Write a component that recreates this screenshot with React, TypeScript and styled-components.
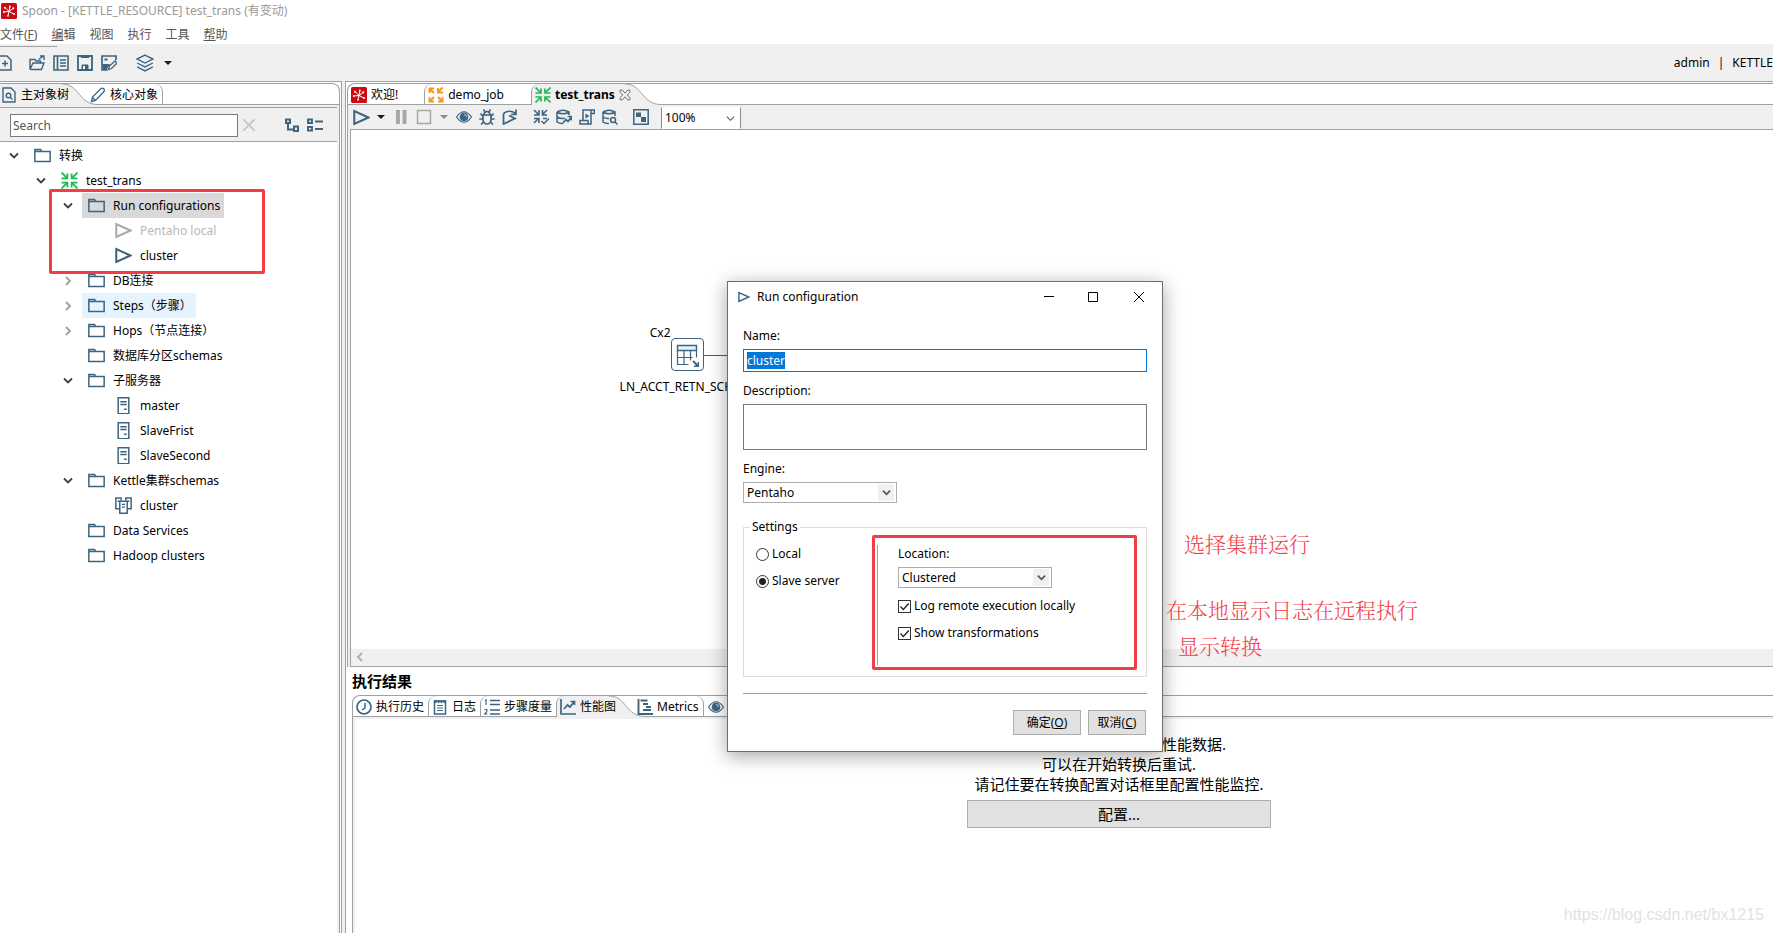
import React, { useEffect, useRef } from "react";
import styled, { createGlobalStyle, css } from "styled-components";

const LINE = "#a0a0a0";
const FACE = "#f0f0f0";
const BLUE = "#3d6480";
const RED = "#f23c46";

const GlobalStyle = createGlobalStyle`
  * { box-sizing: border-box; }
  body {
    margin: 0;
    background: ${FACE};
    color: #000;
    font: 12px/18px "Noto Sans", "Noto Sans CJK SC", sans-serif;
  }
  button, input, textarea, select { font: inherit; color: inherit; }
`;

/* ---------- icons ---------- */

const Svg = styled.svg`
  display: block;
  flex: none;
  fill: none;
`;

type IconName =
  | "spoon" | "newFile" | "open" | "explore" | "save" | "saveAs" | "layers" | "pageSearch" | "pencil"
  | "clear" | "expand" | "collapse" | "folder" | "trans" | "job" | "play" | "server" | "cluster"
  | "pause" | "stop" | "eye" | "bug" | "replay" | "verify" | "impact" | "sql" | "dbSearch" | "results"
  | "history" | "log" | "metrics" | "chart" | "gantt" | "close";

const drawings: Record<IconName, React.ReactNode> = {
  spoon: (
    <>
      <rect width="16" height="16" rx="1.5" fill="#cc0a14" stroke="none" />
      <path d="M8 8.500L4.500 5M8 8.500l.800-4.500M8 8.500l4-3M8 8.500l5 2.500M8 8.500l-1 4M8 8.500l-5 .500" stroke="#fff" strokeWidth="1" />
      <g fill="#fff" stroke="none">
        <circle cx="4" cy="4.800" r="1" /><circle cx="12.300" cy="5.200" r="1" />
        <circle cx="13" cy="11" r="1" /><circle cx="7" cy="12.800" r=".9" />
        <circle cx="2.800" cy="9" r=".9" /><circle cx="8.900" cy="3.500" r=".9" />
      </g>
    </>
  ),
  newFile: <><path d="M2.500 1h8.500l4 4v10H2.500z" strokeWidth="1.500" /><path d="M6 8.500h6M9 5.500v6" strokeWidth="1.500" /></>,
  open: (
    <>
      <path d="M1 14.500V4.500h5l1 1.500h4.500v2M1 14.500h11.500l2.500-6.500H4L1 14.500" strokeWidth="1.400" />
      <path d="M9.500 4.500l5-3.500M11 1h4v4" strokeWidth="1.400" />
    </>
  ),
  explore: <><path d="M1 1h14v14H1zM4.500 1v14" strokeWidth="1.600" /><path d="M7 5h6M7 8h6M7 11h6" strokeWidth="1.500" /></>,
  save: <><path d="M1 1h14v14H1z" strokeWidth="1.800" /><path d="M4 2.500h8M5 10h6v5H5z" fill={BLUE} strokeWidth="1" /><path d="M6 11h2v3H6z" fill="#fff" stroke="none" /></>,
  saveAs: <><path d="M6.500 15H1V1h14v4" strokeWidth="1.700" /><path d="M3.500 3.500h3v2h-3zM2 9h7l-3.500 6H2z" fill={BLUE} stroke="none" /><path d="M7.500 14.500l1-3.500 5.500-5 2 2-5.500 5.500z" strokeWidth="1.300" /></>,
  layers: <path d="M8 1l7 3.500L8 8 1 4.500zM1 8l7 3.500L15 8M1 11.500L8 15l7-3.500" strokeWidth="1.200" />,
  pageSearch: <><path d="M2 1h8l4 4v10H2z" strokeWidth="1.400" /><circle cx="7.500" cy="8.500" r="2.300" strokeWidth="1.400" /><path d="M9.500 10.500l2 2" strokeWidth="1.400" /></>,
  pencil: <path d="M1.500 14.500l1-4.500 8.500-8.500q1.500-1 2.700.3t.3 2.700L5.500 13.500zM2.500 10.500l3 3" strokeWidth="1.300" />,
  clear: <path d="M1.500 1.500l13 13M14.500 1.500l-13 13" stroke="#c4c4c4" strokeWidth="2" />,
  expand: <path d="M2 2.500h4v3.500H2zM4 6v6.500h6M10 9.500h4V14h-4z" strokeWidth="2" />,
  collapse: <path d="M1 2.500h4V6H1zM1 10h4v3.500H1zM8 4.500h8M8 12h8" strokeWidth="1.900" />,
  folder: <path d="M.800 13.700V2.300h5.400l1 2h8v9.400zM.800 4.300h6.400" strokeWidth="1.400" />,
  trans: (
    <g stroke="#1db954" strokeWidth="1.700">
      <path d="M.500.500l5 5M15.500.500l-5 5M.500 15.500l5-5M15.500 15.500l-5-5" />
      <path d="M6 1.500V6H.500M10 1.500V6h5.500M6 14.500V10H.500M10 14.500V10h5.500" />
    </g>
  ),
  job: (
    <g stroke="#f7981d" strokeWidth="2">
      <path d="M1.500 6V1.500H6M2 2l4 4M14.500.500L10 5M10 1v4.500h5M14.500 10v4.500H10M14 14l-4-4M2 14l4-4M1.500 10v4.500H6" />
    </g>
  ),
  play: <path d="M1.200 2v12L14.500 8z" strokeWidth="1.900" />,
  server: <><path d="M3 .700h10v15H3z" strokeWidth="1.400" /><path d="M5 4.500h6M5 7h6M8.500 11.500H11" strokeWidth="1.400" /></>,
  cluster: <><path d="M4 11H.800V1h5v2M12 11h3.200V1h-5v2M4.500 4h7v11.300h-7z" strokeWidth="1.400" /><path d="M2.500 4h2M11.500 4h2M6.500 7h3M6.500 9.500h3" strokeWidth="1.200" /></>,
  pause: <path d="M4.500 0v16M12 0v16" stroke="#a6a6a6" strokeWidth="4.500" />,
  stop: <path d="M1.500 1.500h13v13h-13z" stroke="#a6a6a6" strokeWidth="1.500" />,
  eye: <><path d="M.500 8q7.500-10.500 15 0-7.500 10.500-15 0z" strokeWidth="1.200" /><circle cx="8" cy="8" r="4.400" fill={BLUE} stroke="none" /><path d="M8 5.500a2.500 2.500 0 0 1 2.500 2.500" stroke="#c7d6e0" strokeWidth="1" /></>,
  bug: <><path d="M5 6q0-3.500 3-3.500t3 3.500M4 6h8v5q-.5 4-4 4t-4-4z" strokeWidth="1.700" /><path d="M6 3L4.500.500M10 3L11.500.500M4 7.500L1.500 4.500M12 7.500l2.500-3M4 10H.300M12 10h3.700M5 12.500L2 15.500M11 12.500l3 3" strokeWidth="1.600" /></>,
  replay: <><path d="M1.500 4.500V15L13 9.500 7 6.500" strokeWidth="1.800" /><path d="M1.500 4.500q6-4.500 12 0M14 .500v5H9" strokeWidth="1.700" /></>,
  verify: <><path d="M1 1l4.500 4.500M14 1L9.500 5.500M1 14l4.500-4.500M6 1v5H1M9.500 1v5H14M6 14V9.500H1M10 9.500h4" strokeWidth="1.600" /><path d="M8.500 12l2.500 2.500 5-5" strokeWidth="1.500" /></>,
  impact: <><path d="M1 3q6-3.500 12 0v3M1 3v10q3 2 6 1.500M1 3q6 3.500 12 0M1 8q4 2.500 8 1" strokeWidth="1.500" /><path d="M7 14l3-3.500 2 2 3-4M11.500 7.500H15.300v4" strokeWidth="1.600" /></>,
  sql: <><path d="M4 1h11.300v3.500h-3.300V15H1v-3.500h3zM12 4.500V1M4 11.500h5V15" strokeWidth="1.500" /><path d="M6.500 4.500v5l4-2.500z" fill={BLUE} stroke="none" /></>,
  dbSearch: <><path d="M1 3q6-3.500 12 0v4M1 3v10q3 2 6 1.500M1 3q6 3.500 12 0M1 8q3 2 6 1.500" strokeWidth="1.500" /><circle cx="11" cy="11" r="2.500" strokeWidth="1.500" /><path d="M13 13l2.500 2.500" strokeWidth="1.500" /></>,
  results: <><path d="M.800.800h14.400v14.400H.800z" strokeWidth="1.500" /><path d="M3 3.500h5v4.500H3zM8 8h5v5H8z" fill={BLUE} stroke="none" /></>,
  history: <><circle cx="8" cy="8" r="7" strokeWidth="1.700" /><path d="M9 4v5l-3 2" strokeWidth="1.500" /></>,
  log: <><path d="M2.500 2h11v13h-11z" strokeWidth="1.500" /><path d="M2.500 2.500h11" strokeWidth="3" strokeDasharray="2 1" /><path d="M5 6.500h6M5 9h6M5 11.500h6" strokeWidth="1.200" /></>,
  metrics: (
    <>
      <path d="M6 1.500h10M6 5.500h10M6 11h10M6 15h10" strokeWidth="1.300" />
      <path d="M1 1.500l1-.700V6M.500 11q2-1.500 2.500 0T.700 15H3.500" strokeWidth="1.200" />
    </>
  ),
  chart: <><path d="M1 0v15h15" strokeWidth="1.700" /><path d="M4 10l3.500-4L10 8l4-5M10.500 2.500h4V6" strokeWidth="1.700" /></>,
  gantt: <><path d="M1.500 0v15H16" strokeWidth="1.900" /><path d="M3.500 1.500h7M6 5h5M9 8h5M6 11h8" strokeWidth="2.200" /></>,
  close: <path d="M1.500 1.500h3L8 5.500l3.500-4h3v3L11 8l3.500 3.500v3h-3L8 10.500l-3.500 4h-3v-3L5 8 1.500 4.500z" stroke="#6b6b6b" strokeWidth="1.300" />,
};

const Icon = ({ name, size = 16, muted }: { name: IconName; size?: number; muted?: boolean }) => (
  <Svg width={size} height={size} viewBox="0 0 16 16" stroke={muted ? "#a9a9a9" : BLUE} aria-hidden>
    {drawings[name]}
  </Svg>
);

const Chevron = ({ open }: { open?: boolean }) => (
  <Svg width="10" height="10" viewBox="0 0 10 10" stroke={open ? "#404040" : "#a0a0a0"} strokeWidth="1.8" aria-hidden>
    <path d={open ? "M1 2.500l4 4 4-4" : "M3 1l4 4-4 4"} />
  </Svg>
);

const Caret = ({ muted }: { muted?: boolean }) => (
  <Svg width="8" height="4" viewBox="0 0 8 4" aria-hidden>
    <path d="M0 0h8L4 4z" fill={muted ? "#8a8a8a" : "#1a1a1a"} />
  </Svg>
);

/* ---------- window frame ---------- */

const Window = styled.div`
  position: relative;
  display: flex;
  flex-direction: column;
  height: 100vh;
  min-height: 780px;
  overflow: hidden;
`;

const TitleBar = styled.header`
  display: flex;
  flex: none;
  align-items: center;
  gap: 5px;
  height: 22px;
  padding-left: 1px;
  background: #fff;
  color: #999;
`;

const MenuBar = styled.nav`
  display: flex;
  flex: none;
  align-items: flex-end;
  gap: 14px;
  height: 22px;
  background: #fff;
`;

const MenuButton = styled.button`
  height: 18px;
  padding: 0;
  border: 0;
  background: none;
  color: #555;
`;

const Toolbar = styled.div`
  display: flex;
  align-items: center;
  height: 37px;
  flex: none;
`;

const ShortRule = styled.div`
  position: absolute;
  top: 46px;
  left: 0;
  width: 57px;
  border-top: 1px solid ${LINE};
`;

const ToolButton = styled.button<{ $w?: number; $gap?: number }>`
  display: flex;
  flex: none;
  align-items: center;
  justify-content: center;
  width: ${(p) => p.$w ?? 24}px;
  height: 22px;
  margin-left: ${(p) => p.$gap ?? 0}px;
  padding: 0;
  border: 0;
  background: none;
`;

const Session = styled.div`
  display: flex;
  gap: 8px;
  flex: none;
  margin-left: auto;
  white-space: nowrap;
`;

const Main = styled.main`
  display: flex;
  flex: 1;
  gap: 3px;
  min-height: 0;
`;

/* ---------- tab folders ---------- */

const TabStrip = styled.div<{ $round?: "left" | "right" }>`
  display: flex;
  flex: none;
  isolation: isolate;
  height: 22px;
  border-top: 1px solid ${LINE};
  background: #fff;
  box-shadow: inset 0 -1px 0 ${LINE};
  ${(p) => p.$round === "left" && css`border-left: 1px solid ${LINE}; border-top-left-radius: 8px;`}
  ${(p) => p.$round === "right" && css`border-right: 1px solid ${LINE}; border-top-right-radius: 8px;`}
`;

const TabButton = styled.button<{ $edge?: "left" | "right"; $selected?: boolean; $after?: boolean; $pad?: number; $end?: number }>`
  display: flex;
  flex: none;
  align-items: center;
  gap: 4px;
  height: 21px;
  padding: 0 ${(p) => p.$end ?? 4}px 0 ${(p) => p.$pad ?? 3}px;
  border: 0 solid ${LINE};
  background: ${(p) => (p.$selected ? FACE : "none")};
  ${(p) => p.$edge === "left" && css`border-left-width: 1px; border-top-left-radius: 8px;`}
  ${(p) => p.$edge === "right" && css`border-right-width: 1px; border-top-right-radius: 8px;`}
  ${(p) => p.$after && css`position: relative; margin-left: -10px;`}

  > * { position: relative; z-index: 1; }
`;

const TailSvg = styled.svg`
  display: block;
  flex: none;
  margin-left: -8px;
`;

const Tail = () => (
  <TailSvg width="36" height="21" viewBox="0 0 36 21" aria-hidden>
    <path d="M0 0h36v21H0z" fill="#fff" />
    <path d="M0 0C18 0 16 20.500 36 20.500V21H0z" fill={FACE} />
    <path d="M0 0C18 0 16 20.500 36 20.500" fill="none" stroke={LINE} />
  </TailSvg>
);

/* ---------- left pane ---------- */

const LeftPane = styled.aside`
  display: flex;
  flex: none;
  flex-direction: column;
  width: 342px;
  padding: 1px 1px 0 0;
  border: 1px solid ${LINE};
  border-width: 1px 1px 0 0;
  background: #fff;
`;

const LeftBody = styled.div`
  display: flex;
  flex: 1;
  flex-direction: column;
  min-height: 0;
  padding: 2px 2px 0 0;
  border-right: 1px solid ${LINE};
  background: ${FACE};
`;

const SearchBar = styled.div`
  display: flex;
  align-items: center;
  height: 35px;
  flex: none;
  padding: 1px 0 0 10px;
  border: 1px solid ${LINE};
  border-width: 1px 0;
`;

const SearchInput = styled.input`
  width: 228px;
  height: 23px;
  padding: 0 2px;
  border: 1px solid #7a7a7a;
  background: #fff;
  color: #555;
  outline: none;
  &::placeholder { color: #555; opacity: 1; }
`;

const Tree = styled.ul`
  position: relative;
  flex: 1;
  margin: 0;
  padding: 1px 0 0;
  background: #fff;
  list-style: none;
`;

const TreeRow = styled.li<{ $level: number }>`
  display: flex;
  height: 25px;
  padding-left: ${(p) => p.$level * 27}px;
`;

const Twisty = styled.span`
  display: flex;
  align-items: center;
  justify-content: center;
  width: 28px;
`;

const TreeItem = styled.span<{ $tone?: string; $muted?: boolean }>`
  display: flex;
  align-items: center;
  gap: 8px;
  padding: 0 4px 0 6px;
  background: ${(p) => p.$tone ?? "none"};
  color: ${(p) => (p.$muted ? "#b8b8b8" : "#000")};
`;

const Highlight = styled.div<{ $x: number; $y: number; $w: number; $h: number }>`
  position: absolute;
  top: ${(p) => p.$y}px;
  left: ${(p) => p.$x}px;
  width: ${(p) => p.$w}px;
  height: ${(p) => p.$h}px;
  border: 3px solid ${RED};
  border-radius: 2px;
  pointer-events: none;
`;

interface Node {
  level: number;
  label: string;
  icon: IconName;
  open?: boolean;
  tone?: string;
  muted?: boolean;
}

const nodes: Node[] = [
  { level: 0, label: "转换", icon: "folder", open: true },
  { level: 1, label: "test_trans", icon: "trans", open: true },
  { level: 2, label: "Run configurations", icon: "folder", open: true, tone: "#d9d9d9" },
  { level: 3, label: "Pentaho local", icon: "play", muted: true },
  { level: 3, label: "cluster", icon: "play" },
  { level: 2, label: "DB连接", icon: "folder", open: false },
  { level: 2, label: "Steps（步骤）", icon: "folder", open: false, tone: "#e5f3ff" },
  { level: 2, label: "Hops（节点连接）", icon: "folder", open: false },
  { level: 2, label: "数据库分区schemas", icon: "folder" },
  { level: 2, label: "子服务器", icon: "folder", open: true },
  { level: 3, label: "master", icon: "server" },
  { level: 3, label: "SlaveFrist", icon: "server" },
  { level: 3, label: "SlaveSecond", icon: "server" },
  { level: 2, label: "Kettle集群schemas", icon: "folder", open: true },
  { level: 3, label: "cluster", icon: "cluster" },
  { level: 2, label: "Data Services", icon: "folder" },
  { level: 2, label: "Hadoop clusters", icon: "folder" },
];

/* ---------- right pane ---------- */

const RightPane = styled.section`
  display: flex;
  flex: 1;
  flex-direction: column;
  min-width: 0;
  padding: 1px 0 0 1px;
  border: 1px solid ${LINE};
  border-width: 1px 0 0 1px;
  background: #fff;
`;

const EditorBody = styled.div`
  display: flex;
  flex: 1;
  flex-direction: column;
  min-height: 0;
  padding-left: 2px;
  border-left: 1px solid ${LINE};
  background: ${FACE};
`;

const EditorTools = styled.div`
  display: flex;
  flex: none;
  align-items: center;
  height: 24px;
`;

const Canvas = styled.div`
  position: relative;
  flex: 1;
  min-height: 0;
  border: 1px solid ${LINE};
  border-width: 1px 0 0 1px;
  background: #fff;
`;

const ScrollBar = styled.div`
  display: flex;
  flex: none;
  align-items: center;
  height: 18px;
  padding: 0 5px 2px;
  border: 1px solid ${LINE};
  border-width: 0 0 1px 1px;
`;

const StepNode = styled.div`
  position: absolute;
  top: 200px;
  left: 261px;
  display: grid;
  grid-template-columns: 1fr 33px 1fr;
  row-gap: 7px;
  width: 150px;
`;

const StepCopies = styled.span`
  height: 33px;
  margin-top: -6px;
  text-align: right;
`;

const StepBox = styled.span`
  display: flex;
  align-items: center;
  justify-content: center;
  height: 33px;
  margin-top: 8px;
  border: 1px solid ${BLUE};
  border-radius: 4px;
`;

const Hop = styled.span`
  height: 1px;
  margin-top: 25px;
  background: ${BLUE};
`;

const StepName = styled.span`
  grid-column: 1 / -1;
  justify-self: center;
  white-space: nowrap;
`;

const SelectWrap = styled.span<{ $w: number; $flat?: boolean }>`
  display: grid;
  grid-template-columns: 1fr 18px;
  align-items: center;
  width: ${(p) => p.$w}px;
  height: 21px;
  border: 1px solid #adadad;
  background: #fff;
  ${(p) => p.$flat && css`height: 22px; margin-left: 8px; border-color: #fff #8a8a8a #fff #8a8a8a; align-self: flex-end;`}
`;

const SelectBox = styled.select`
  grid-area: 1 / 1 / 2 / 3;
  width: 100%;
  height: 19px;
  padding: 0 20px 0 3px;
  border: 0;
  background: none;
  appearance: none;
  outline: none;
`;

const SelectArrow = styled.span<{ $flat?: boolean }>`
  display: flex;
  grid-area: 1 / 2 / 2 / 3;
  align-items: center;
  justify-content: center;
  width: 16px;
  height: 17px;
  background: ${(p) => (p.$flat ? "none" : FACE)};
  pointer-events: none;
`;

const Select = ({ id, value, width, flat }: { id: string; value: string; width: number; flat?: boolean }) => (
  <SelectWrap $w={width} $flat={flat}>
    <SelectBox id={id} aria-label={flat ? "Zoom" : undefined} defaultValue={value}>
      <option>{value}</option>
    </SelectBox>
    <SelectArrow $flat={flat}>
      <Svg width="9" height="9" viewBox="0 0 10 10" stroke="#555" strokeWidth={flat ? 1.2 : 2} aria-hidden>
        <path d="M1 3l4 4 4-4" />
      </Svg>
    </SelectArrow>
  </SelectWrap>
);

const Results = styled.section`
  display: flex;
  flex: none;
  flex-direction: column;
  height: 266px;
  padding-left: 5px;
  overflow: hidden;
`;

const ResultsTitle = styled.h2`
  margin: 0;
  height: 28px;
  font-size: 15px;
  line-height: 28px;
`;

const ResultsBody = styled.div`
  flex: 1;
  border: 1px solid ${LINE};
  border-width: 0 0 0 1px;
  box-shadow: inset 2px 2px 0 ${FACE};
`;

const EmptyState = styled.div`
  display: flex;
  flex-direction: column;
  align-items: center;
  margin-right: -112px;
  padding-top: 17px;
  font-size: 15px;
  line-height: 20px;
`;

const FaceButton = styled.button<{ $w: number; $h: number }>`
  width: ${(p) => p.$w}px;
  height: ${(p) => p.$h}px;
  padding: 0;
  border: 1px solid #adadad;
  background: #e1e1e1;
`;

const ConfigureButton = styled(FaceButton)`
  margin-top: 6px;
`;

/* ---------- dialog ---------- */

const Dialog = styled.div`
  position: absolute;
  top: 281px;
  left: 727px;
  width: 436px;
  border: 1px solid #6e6e6e;
  background: #fff;
  box-shadow: 0 4px 18px rgba(0, 0, 0, 0.36);
`;

const DialogTitle = styled.div`
  display: flex;
  align-items: center;
  height: 29px;
  padding-left: 10px;
`;

const DialogName = styled.span`
  flex: 1;
  margin-left: 7px;
`;

const DialogForm = styled.form`
  display: flex;
  flex-direction: column;
  padding: 16px 15px;
`;

const Field = styled.div`
  display: flex;
  flex-direction: column;
  align-items: flex-start;
  gap: 4px;
  margin-bottom: 10px;
`;

const NameInput = styled.input`
  width: 100%;
  height: 23px;
  padding: 0 3px;
  border: 1px solid #0078d7;
  outline: none;
  &::selection { background: #0078d7; color: #fff; }
`;

const DescriptionInput = styled.textarea`
  width: 100%;
  height: 46px;
  border: 1px solid #7a7a7a;
  outline: none;
  resize: none;
`;

const Settings = styled.fieldset`
  display: flex;
  margin: 5px 0 16px;
  padding: 9px 0 11px 12px;
  border: 1px solid #dcdcdc;
`;

const Legend = styled.legend`
  margin-left: -6px;
  padding: 0 2px;
`;

const Options = styled.div`
  display: flex;
  flex-direction: column;
  gap: 9px;
  width: 121px;
`;

const Location = styled.div`
  position: relative;
  display: flex;
  flex: 1;
  flex-direction: column;
  align-items: flex-start;
  gap: 9px;
  height: 120px;
  padding-left: 20px;
  border-left: 1px solid ${LINE};
`;

const LocationField = styled.div`
  display: flex;
  flex-direction: column;
  gap: 4px;
`;

const Choice = styled.label`
  display: flex;
  align-items: center;
  gap: 3px;
  height: 18px;
`;

const Radio = styled.input`
  width: 13px;
  height: 13px;
  margin: 0;
  border: 1px solid #333;
  border-radius: 50%;
  background: #fff;
  appearance: none;
  &:checked { background: radial-gradient(circle, #222 0 3px, #fff 4px); }
`;

const CheckBox = styled.input`
  grid-area: 1 / 1;
  width: 13px;
  height: 13px;
  margin: 0;
  border: 1px solid #333;
  background: #fff;
  appearance: none;
`;

const CheckWrap = styled.span`
  display: grid;
  place-items: center;
  > svg { grid-area: 1 / 1; pointer-events: none; }
`;

const Check = ({ label }: { label: string }) => (
  <Choice>
    <CheckWrap>
      <CheckBox type="checkbox" defaultChecked />
      <Svg width="11" height="11" viewBox="0 0 11 11" stroke="#222" strokeWidth="1.3" aria-hidden>
        <path d="M1.500 5.500l2.800 3L9.800 2.500" />
      </Svg>
    </CheckWrap>
    {label}
  </Choice>
);

const DialogActions = styled.div`
  display: flex;
  justify-content: flex-end;
  gap: 7px;
  padding: 16px 1px 0 0;
  border-top: 1px solid ${LINE};
`;

const Note = styled.p<{ $x: number; $y: number }>`
  position: absolute;
  top: ${(p) => p.$y}px;
  left: ${(p) => p.$x}px;
  margin: 0;
  color: ${RED};
  font: 300 21px/28px "Noto Serif CJK SC", "Noto Sans CJK SC", serif;
`;

const Watermark = styled.span`
  position: absolute;
  right: 9px;
  bottom: 6px;
  color: #e2e2e2;
  font: 16px/24px "Liberation Sans", sans-serif;
`;

const RunDialog = () => {
  const nameRef = useRef<HTMLInputElement>(null);
  useEffect(() => {
    nameRef.current?.focus();
    nameRef.current?.select();
  }, []);

  return (
    <Dialog role="dialog" aria-labelledby="dialog-name">
      <DialogTitle>
        <Icon name="play" size={12} />
        <DialogName id="dialog-name">Run configuration</DialogName>
        <ToolButton $w={45} aria-label="Minimize">
          <Svg width="12" height="12" stroke="#000"><path d="M1 5.500h10" /></Svg>
        </ToolButton>
        <ToolButton $w={45} aria-label="Maximize">
          <Svg width="12" height="12" stroke="#000"><path d="M.500 1.500h9v9h-9z" /></Svg>
        </ToolButton>
        <ToolButton $w={46} aria-label="Close">
          <Svg width="12" height="12" stroke="#000"><path d="M1 1l10 10M11 1L1 11" /></Svg>
        </ToolButton>
      </DialogTitle>
      <DialogForm onSubmit={(e) => e.preventDefault()}>
        <Field>
          <label htmlFor="name">Name:</label>
          <NameInput id="name" ref={nameRef} defaultValue="cluster" />
        </Field>
        <Field>
          <label htmlFor="description">Description:</label>
          <DescriptionInput id="description" />
        </Field>
        <Field>
          <label htmlFor="engine">Engine:</label>
          <Select id="engine" value="Pentaho" width={154} />
        </Field>
        <Settings>
          <Legend>Settings</Legend>
          <Options>
            <Choice><Radio type="radio" name="target" />Local</Choice>
            <Choice><Radio type="radio" name="target" defaultChecked />Slave server</Choice>
          </Options>
          <Location>
            <LocationField>
              <label htmlFor="location">Location:</label>
              <Select id="location" value="Clustered" width={154} />
            </LocationField>
            <Check label="Log remote execution locally" />
            <Check label="Show transformations" />
            <Highlight $x={-6} $y={-10} $w={265} $h={135} />
          </Location>
        </Settings>
        <DialogActions>
          <FaceButton $w={68} $h={25} type="submit">确定(<u>O</u>)</FaceButton>
          <FaceButton $w={58} $h={25} type="button">取消(<u>C</u>)</FaceButton>
        </DialogActions>
      </DialogForm>
    </Dialog>
  );
};

export default function App() {
  return (
    <>
      <GlobalStyle />
      <Window>
        <TitleBar>
          <Icon name="spoon" />
          <span>Spoon - [KETTLE_RESOURCE] test_trans (有变动)</span>
        </TitleBar>
        <MenuBar>
          <MenuButton>文件(<u>F</u>)</MenuButton>
          <MenuButton><u>编</u>辑</MenuButton>
          <MenuButton>视图</MenuButton>
          <MenuButton>执行</MenuButton>
          <MenuButton>工具</MenuButton>
          <MenuButton><u>帮</u>助</MenuButton>
        </MenuBar>
        <ShortRule />
        <Toolbar>
          <ToolButton $gap={-8} aria-label="New"><Icon name="newFile" /></ToolButton>
          <ToolButton $gap={9} aria-label="Open"><Icon name="open" /></ToolButton>
          <ToolButton aria-label="Explore repository"><Icon name="explore" /></ToolButton>
          <ToolButton aria-label="Save"><Icon name="save" /></ToolButton>
          <ToolButton aria-label="Save as"><Icon name="saveAs" /></ToolButton>
          <ToolButton $gap={12} aria-label="Perspective"><Icon name="layers" size={18} /></ToolButton>
          <ToolButton $w={21} aria-label="Choose perspective"><Caret /></ToolButton>
          <Session><span>admin</span><span>|</span><span>KETTLE</span></Session>
        </Toolbar>

        <Main>
          <LeftPane>
            <TabStrip $round="right">
              <TabButton $selected $pad={1} $end={1}><Icon name="pageSearch" /><span>主对象树</span></TabButton>
              <Tail />
              <TabButton $edge="right" $after $pad={2}><Icon name="pencil" /><span>核心对象</span></TabButton>
            </TabStrip>
            <LeftBody>
              <SearchBar>
                <SearchInput placeholder="Search" aria-label="Search" />
                <ToolButton $w={22} aria-label="Clear"><Icon name="clear" size={14} /></ToolButton>
                <ToolButton $gap={20} $w={23} aria-label="Expand all"><Icon name="expand" /></ToolButton>
                <ToolButton $w={23} aria-label="Collapse all"><Icon name="collapse" /></ToolButton>
              </SearchBar>
              <Tree>
                {nodes.map((n, i) => (
                  <TreeRow key={i} $level={n.level}>
                    <Twisty>{n.open !== undefined && <Chevron open={n.open} />}</Twisty>
                    <TreeItem $tone={n.tone} $muted={n.muted}>
                      <Icon name={n.icon} size={17} muted={n.muted} />
                      <span>{n.label}</span>
                    </TreeItem>
                  </TreeRow>
                ))}
                <Highlight $x={49} $y={47} $w={216} $h={85} />
              </Tree>
            </LeftBody>
          </LeftPane>

          <RightPane>
            <TabStrip $round="left">
              <TabButton $end={26}><Icon name="spoon" /><span>欢迎!</span></TabButton>
              <TabButton $edge="left" $end={27}><Icon name="job" /><span>demo_job</span></TabButton>
              <TabButton $edge="left" $selected $end={2}>
                <Icon name="trans" /><b>test_trans</b><Icon name="close" size={12} />
              </TabButton>
              <Tail />
            </TabStrip>
            <EditorBody>
              <EditorTools>
                <ToolButton $w={23} aria-label="Run"><Icon name="play" size={17} /></ToolButton>
                <ToolButton $w={16} aria-label="Run options"><Caret /></ToolButton>
                <ToolButton $w={23} aria-label="Pause"><Icon name="pause" size={14} /></ToolButton>
                <ToolButton $w={23} aria-label="Stop"><Icon name="stop" /></ToolButton>
                <ToolButton $w={17} aria-label="Stop options"><Caret muted /></ToolButton>
                <ToolButton $w={23} aria-label="Preview"><Icon name="eye" /></ToolButton>
                <ToolButton $w={23} aria-label="Debug"><Icon name="bug" /></ToolButton>
                <ToolButton $w={23} aria-label="Replay"><Icon name="replay" /></ToolButton>
                <ToolButton $w={23} $gap={8} aria-label="Verify"><Icon name="verify" /></ToolButton>
                <ToolButton $w={23} aria-label="Impact"><Icon name="impact" /></ToolButton>
                <ToolButton $w={23} aria-label="SQL"><Icon name="sql" /></ToolButton>
                <ToolButton $w={23} aria-label="Explore database"><Icon name="dbSearch" /></ToolButton>
                <ToolButton $w={24} $gap={8} aria-label="Show results"><Icon name="results" /></ToolButton>
                <Select id="zoom" value="100%" width={80} flat />
              </EditorTools>
              <Canvas>
                <StepNode>
                  <StepCopies>Cx2</StepCopies>
                  <StepBox>
                    <Svg width="24" height="24" viewBox="0 0 24 24" stroke={BLUE} aria-hidden>
                      <path d="M2.500 2.500h19v5h-19z" fill="#e3f2f9" strokeWidth="1.4" />
                      <path d="M2.500 7.500v14h11M21.500 7.500v7M2.500 14.500h15M9 7.500v14M15.500 7.500v10" strokeWidth="1.2" />
                      <path d="M18 18l5 5M23.500 19v4.500H19" strokeWidth="1.8" />
                    </Svg>
                  </StepBox>
                  <Hop />
                  <StepName>LN_ACCT_RETN_SCHDTL</StepName>
                </StepNode>
              </Canvas>
              <ScrollBar>
                <Svg width="8" height="10" viewBox="0 0 8 10" stroke="#b0b0b0" strokeWidth="2"><path d="M6 1L2 5l4 4" /></Svg>
              </ScrollBar>
            </EditorBody>
            <Results>
              <ResultsTitle>执行结果</ResultsTitle>
              <TabStrip $round="left">
                <TabButton><Icon name="history" /><span>执行历史</span></TabButton>
                <TabButton $edge="left"><Icon name="log" /><span>日志</span></TabButton>
                <TabButton $edge="left"><Icon name="metrics" /><span>步骤度量</span></TabButton>
                <TabButton $edge="left" $selected $end={1}><Icon name="chart" /><span>性能图</span></TabButton>
                <Tail />
                <TabButton $edge="right" $after $pad={2}><Icon name="gantt" /><span>Metrics</span></TabButton>
                <TabButton $pad={4} aria-label="Preview data"><Icon name="eye" /></TabButton>
              </TabStrip>
              <ResultsBody>
                <EmptyState>
                  <span>当前转换没有可显示的性能数据.</span>
                  <span>可以在开始转换后重试.</span>
                  <span>请记住要在转换配置对话框里配置性能监控.</span>
                  <ConfigureButton $w={304} $h={28}>配置...</ConfigureButton>
                </EmptyState>
              </ResultsBody>
            </Results>
          </RightPane>
        </Main>

        <RunDialog />
        <Note $x={1184} $y={529}>选择集群运行</Note>
        <Note $x={1166} $y={595}>在本地显示日志在远程执行</Note>
        <Note $x={1178} $y={631}>显示转换</Note>
        <Watermark>https://blog.csdn.net/bx1215</Watermark>
      </Window>
    </>
  );
}
